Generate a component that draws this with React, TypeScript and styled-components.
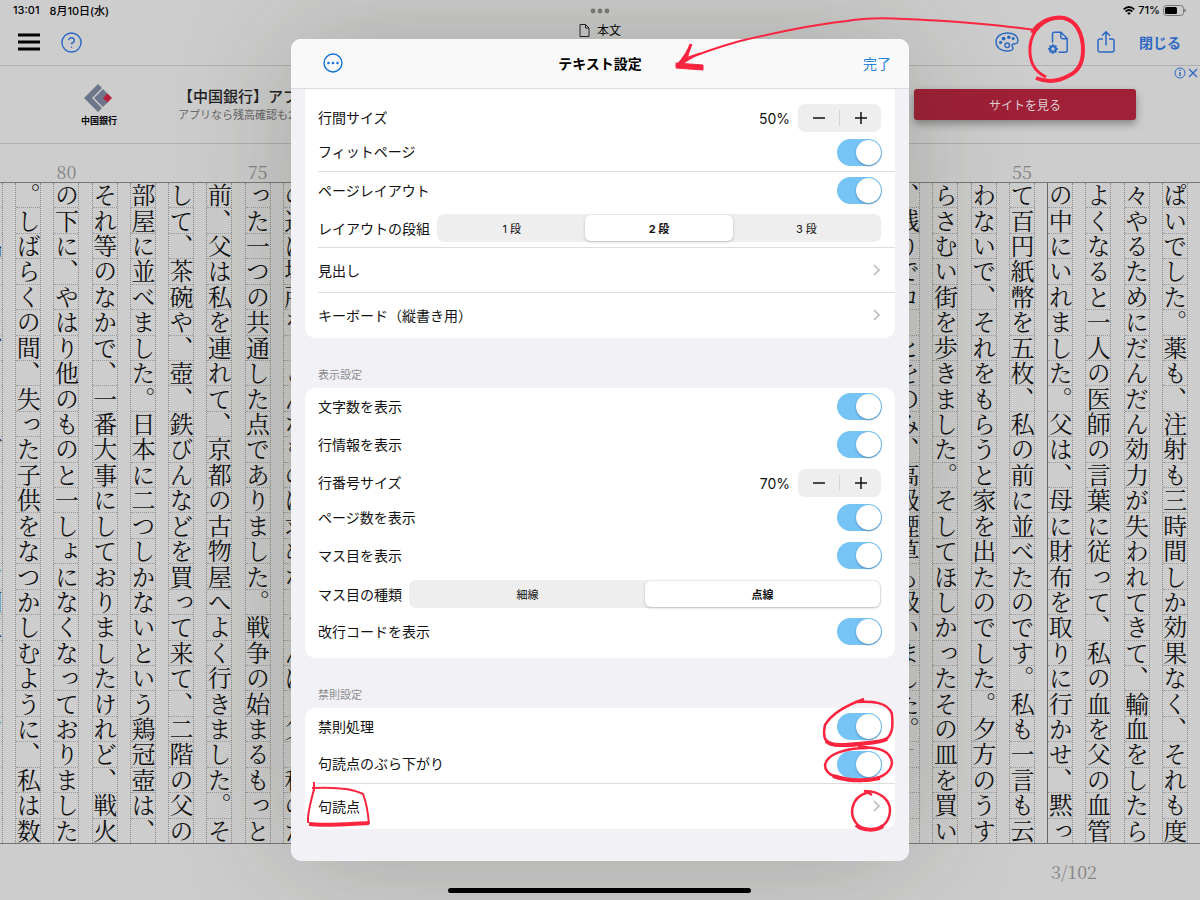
import React, { useState } from "react";
import styled, { createGlobalStyle } from "styled-components";
import { CircleHelp } from "lucide-react";

const sans = `Inter, "Noto Sans CJK JP", sans-serif`;
const mincho = `"Noto Serif CJK JP", "Noto Sans CJK JP", serif`;
const blue = "#2c69c4";

const Global = createGlobalStyle`
  *, *::before, *::after { box-sizing: border-box; }
  body { margin: 0; background: #cdcdcd; color: #000; font-family: ${sans}; }
  button { font: inherit; color: inherit; background: none; border: 0; padding: 0; cursor: pointer; }
  svg { display: block; }
`;

const Page = styled.div`
  position: relative;
  display: flex;
  flex-direction: column;
  min-height: 100vh;
  overflow: hidden;
`;

/* ---------- top chrome ---------- */

const TopBar = styled.header`
  display: grid;
  grid-template-columns: 1fr auto 1fr;
  height: 66px;
  border-bottom: 1px solid #b0b0b0;
`;

const BarSide = styled.div<{ $end?: boolean }>`
  display: flex;
  flex-direction: column;
  align-items: ${(p) => (p.$end ? "flex-end" : "flex-start")};
`;

const Status = styled.div`
  display: flex;
  align-items: center;
  gap: 10px;
  height: 20px;
  padding: 0 14px 0 13px;
  font-size: 11px;
  font-weight: 500;
`;

const Indicators = styled(Status)`
  gap: 3px;
`;

const Actions = styled.div<{ $gap: number }>`
  display: flex;
  align-items: center;
  gap: ${(p) => p.$gap}px;
  height: 46px;
  padding: 0 19px 2px 18px;
`;

const IconButton = styled.button`
  color: ${blue};
`;

const CloseButton = styled.button`
  margin-left: -4px;
  color: ${blue};
  font-size: 14px;
  font-weight: 700;
`;

const BarCenter = styled.div`
  display: flex;
  flex-direction: column;
  align-items: center;
`;

const Dots = styled.div`
  display: flex;
  align-items: center;
  height: 22px;
`;

const DocTitle = styled.div`
  display: flex;
  align-items: center;
  gap: 7px;
  height: 17px;
  font-size: 12px;
  line-height: 17px;
`;

/* ---------- advertisement ---------- */

const Ad = styled.aside`
  position: relative;
  display: flex;
  align-items: center;
  height: 78px;
  border-bottom: 1px solid #b0b0b0;
`;

const Bank = styled.div`
  display: flex;
  flex-direction: column;
  align-items: center;
  gap: 3px;
  width: 198px;
  padding-top: 2px;
  font-size: 9px;
  line-height: 12px;
  font-weight: 700;
`;

const AdCopy = styled.div`
  flex: 1;
  margin-left: -20px;
`;

const AdHeadline = styled.div`
  font-size: 15px;
  line-height: 20px;
  font-weight: 500;
  color: #222;
`;

const AdText = styled.div`
  font-size: 11px;
  line-height: 16px;
  color: #666;
`;

const AdLink = styled.a`
  display: flex;
  align-items: center;
  justify-content: center;
  width: 222px;
  height: 31px;
  margin-right: 64px;
  border-radius: 3px;
  background: #9f2037;
  box-shadow: 0 4px 8px rgba(0, 0, 0, 0.35);
  color: #dcd0d2;
  font-size: 12px;
  text-decoration: none;
`;

const AdChoices = styled.div`
  position: absolute;
  top: 1px;
  right: 2px;
  display: flex;
  gap: 2px;
`;

/* ---------- manuscript ---------- */

const lineGrid = `
  display: grid;
  grid-template-columns: repeat(32, 1fr);
  margin-left: -23px;
`;

const LineNumbers = styled.div`
  ${lineGrid}
  height: 38px;
`;

const LineNumber = styled.div`
  display: flex;
  justify-content: center;
  width: 26px;
  padding-top: 15px;
  font-family: ${mincho};
  font-size: 18px;
  line-height: 24px;
  color: #838383;
`;

const Manuscript = styled.main`
  ${lineGrid}
  flex: 1;
  border-top: 1px solid #777;
  border-bottom: 1px solid #777;
`;

const Line = styled.div<{ $divider?: boolean }>`
  display: flex;
  flex-direction: column;
  width: 26px;
  border-left: 1px ${(p) => (p.$divider ? "solid #666" : "dotted #888")};
  border-right: 1px dotted #888;
`;

const Cell = styled.div<{ $mark?: boolean }>`
  display: flex;
  align-items: center;
  justify-content: center;
  flex: 1 1 0;
  min-height: 0;
  border-bottom: 1px dotted #999;
  writing-mode: vertical-rl;
  font-family: ${mincho};
  font-size: 24px;
  line-height: 24px;
  font-weight: 400;
  color: ${(p) => (p.$mark ? "#888" : "#111")};
  &:last-child { border-bottom: 0; }
`;

const Footer = styled.footer`
  height: 56px;
  padding: 15px 103px 0 0;
  text-align: right;
  font-family: ${mincho};
  font-size: 18px;
  line-height: 24px;
  color: #838383;
`;

const HomeIndicator = styled.div`
  position: absolute;
  bottom: 7px;
  left: 50%;
  width: 303px;
  height: 5px;
  margin-left: -152px;
  border-radius: 3px;
  background: #000;
`;

/* ---------- settings sheet ---------- */

const Overlay = styled.div`
  position: absolute;
  inset: 0;
  display: flex;
  justify-content: center;
  padding: 39px 0;
`;

const Sheet = styled.section`
  display: flex;
  flex-direction: column;
  width: min(618px, 100%);
  border-radius: 10px;
  overflow: hidden;
  background: #f2f2f6;
  box-shadow: 0 0 120px rgba(30, 40, 25, 0.22);
`;

const SheetHeader = styled.div`
  display: grid;
  grid-template-columns: 1fr auto 1fr;
  align-items: center;
  height: 50px;
  flex: none;
  padding: 0 18px 2px 32px;
  border-bottom: 1px solid #dcdcdf;
  background: #f9f9fa;
`;

const SheetTitle = styled.h1`
  margin: 0 14px 0 0;
  font-size: 14px;
  font-weight: 700;
`;

const MoreButton = styled.button`
  justify-self: start;
  color: #1272d8;
`;

const DoneButton = styled.button`
  justify-self: end;
  color: #2a86d8;
  font-size: 14px;
`;

const SheetBody = styled.div`
  flex: 1;
  overflow: hidden;
  padding: 0 14px;
`;

const Card = styled.div<{ $continued?: boolean; $roomy?: boolean }>`
  padding: ${(p) => (p.$continued ? 10 : 0)}px 0 ${(p) => (p.$roomy ? 7 : 0)}px;
  border-radius: ${(p) => (p.$continued ? "0 0 10px 10px" : "10px")};
  background: #fff;
`;

const GroupTitle = styled.h2`
  height: 50px;
  margin: 0;
  padding: 29px 13px 0;
  font-size: 11px;
  line-height: 16px;
  font-weight: 400;
  color: #8b8b8f;
`;

const Row = styled.div<{ $line?: boolean }>`
  display: flex;
  align-items: center;
  height: 38px;
  margin-left: 13px;
  padding: 0 13px 1px 0;
  border-bottom: ${(p) => (p.$line ? "1px solid #dcdcde" : "0")};
  font-size: 14px;
  color: #111;
`;

const StepperLine = styled(Row)`
  height: 35px;
  padding: 3px 14px 0 0;
`;

const NavRow = styled.button<{ $line?: boolean }>`
  display: flex;
  align-items: center;
  justify-content: space-between;
  width: calc(100% - 13px);
  height: 45px;
  margin-left: 13px;
  padding: 0 15px 1px 0;
  border-bottom: ${(p) => (p.$line ? "1px solid #dcdcde" : "0")};
  font-size: 14px;
  text-align: left;
  color: #111;
`;

const RowLabel = styled.label`
  flex: 1;
  padding-bottom: 2px;
`;

const Switch = styled.input`
  appearance: none;
  position: relative;
  width: 45px;
  height: 27px;
  margin: 0;
  border-radius: 14px;
  background: #e4e4e6;
  cursor: pointer;
  &::before {
    content: "";
    position: absolute;
    top: 1px;
    left: 1px;
    width: 25px;
    height: 25px;
    border-radius: 50%;
    background: #fff;
    box-shadow: 0 1px 2px rgba(0, 50, 110, 0.4);
  }
  &:checked { background: #76c3f5; }
  &:checked::before { left: 19px; }
`;

const StepValue = styled.output`
  margin-right: 8px;
  font-size: 14px;
`;

const StepBox = styled.div`
  display: flex;
  width: 83px;
  height: 28px;
  padding: 6px 0;
  border-radius: 7px;
  background: #eeeeef;
`;

const StepButton = styled.button`
  display: flex;
  flex: 1;
  align-items: center;
  justify-content: center;
  & + & { border-left: 1px solid #d5d5d8; }
`;

const Segments = styled.fieldset`
  display: flex;
  flex: 1;
  min-width: 0;
  height: 28px;
  margin: 0 1px 0 7px;
  padding: 1px;
  border: 0;
  border-radius: 7px;
  background: #eeeeef;
`;

const Segment = styled.label<{ $on: boolean }>`
  display: flex;
  flex: 1;
  align-items: center;
  justify-content: center;
  border-radius: 6px;
  background: ${(p) => (p.$on ? "#fff" : "transparent")};
  box-shadow: ${(p) => (p.$on ? "0 1px 3px rgba(0,0,0,0.22)" : "none")};
  font-size: 11px;
  font-weight: ${(p) => (p.$on ? 700 : 400)};
  cursor: pointer;
`;

const SegmentInput = styled.input`
  appearance: none;
  width: 0;
  height: 0;
  margin: 0;
`;

const Ink = styled.svg`
  position: absolute;
  inset: 0;
  width: 100%;
  height: 100%;
  pointer-events: none;
`;

/* ---------- pieces ---------- */

function ToggleRow({ id, label, line }: { id: string; label: string; line?: boolean }) {
  const [on, setOn] = useState(true);
  return (
    <Row $line={line}>
      <RowLabel htmlFor={id}>{label}</RowLabel>
      <Switch id={id} type="checkbox" checked={on} onChange={() => setOn(!on)} />
    </Row>
  );
}

function StepperRow({ label, initial }: { label: string; initial: number }) {
  const [value, setValue] = useState(initial);
  return (
    <StepperLine>
      <RowLabel as="span">{label}</RowLabel>
      <StepValue>{value}%</StepValue>
      <StepBox>
        <StepButton aria-label={label + "を減らす"} onClick={() => setValue(value - 10)}>
          <svg width="14" height="14" stroke="#111" strokeWidth="1.5"><path d="M1 7h12" /></svg>
        </StepButton>
        <StepButton aria-label={label + "を増やす"} onClick={() => setValue(value + 10)}>
          <svg width="14" height="14" stroke="#111" strokeWidth="1.5"><path d="M1 7h12M7 1v12" /></svg>
        </StepButton>
      </StepBox>
    </StepperLine>
  );
}

function SegmentRow({ name, label, options, initial, line }: {
  name: string; label: string; options: string[]; initial: number; line?: boolean;
}) {
  const [index, setIndex] = useState(initial);
  return (
    <Row $line={line}>
      <span>{label}</span>
      <Segments aria-label={label}>
        {options.map((o, i) => (
          <Segment key={o} $on={i === index}>
            <SegmentInput type="radio" name={name} checked={i === index} onChange={() => setIndex(i)} />
            {o}
          </Segment>
        ))}
      </Segments>
    </Row>
  );
}

function LinkRow({ label, line }: { label: string; line?: boolean }) {
  return (
    <NavRow $line={line}>
      {label}
      <svg width="7" height="12" fill="none" stroke="#bdbdc1" strokeWidth="1.7"><path d="M1 1l5 5-5 5" /></svg>
    </NavRow>
  );
}

const PaletteIcon = () => (
  <svg width="24" height="20" viewBox="0 0 24 20" fill="none" stroke="currentColor" strokeWidth="1.4">
    <path d="M12.5 1C6 .8 1 4.600 1 10c0 5.200 4.800 9 10.600 9 3.400 0 6.400-1 6.400-2.700 0-1.300-1.200-1.700-1-3 .2-1.200 1.500-1.500 3-1.500 1.800 0 3-1.300 2.900-3.400C22.600 4 18.500 1.200 12.500 1z" />
    <circle cx="12.200" cy="13.300" r="2.300" />
    <g fill="currentColor" stroke="none">
      <circle cx="5.600" cy="10.400" r="1.600" /><circle cx="8.600" cy="6.600" r="1.900" />
      <circle cx="13.800" cy="5.200" r="1.700" /><circle cx="18.200" cy="6.600" r="1.500" />
    </g>
  </svg>
);

const FileGearIcon = () => (
  <svg width="22" height="23" viewBox="0 0 22 23" fill="none" stroke="currentColor" strokeWidth="1.500">
    <path d="M5.500 11.500V3.200Q5.500 1.200 7.500 1.200H14L20.200 7.500V19.200Q20.200 21.200 18.200 21.200H11.500M13.800 1.400V6Q13.800 7.700 15.500 7.700H20" />
    <circle cx="6" cy="18" r="2.700" strokeWidth="2" />
    <path strokeWidth="1.900" d="M6 13.200v1.800M6 21v1.800M1.200 18H3M9 18h1.800M2.600 14.600l1.300 1.300M8.100 20.100l1.300 1.300M2.600 21.400l1.300-1.300M8.100 15.900l1.300-1.300" />
  </svg>
);

const ShareIcon = () => (
  <svg width="18" height="24" viewBox="0 0 18 24" fill="none" stroke="currentColor" strokeWidth="1.500">
    <path d="M6 9H3Q1 9 1 11V20Q1 22 3 22H15Q17 22 17 20V11Q17 9 15 9H12M9 15.500V2M5 5.800L9 1.800L13 5.800" />
  </svg>
);

/* Manuscript lines keyed by line number; each holds 26 cells. */
const lines: Record<number, string> = {
  51: "ぱいでした。薬も、注射も三時間しか効果なく、それも度",
  52: "々やるためにだんだん効力が失われてきて、輸血をしたら",
  53: "よくなると一人の医師の言葉に従って、私の血を父の血管",
  54: "の中にいれました。父は、母に財布を取りに行かせ、黙っ",
  55: "て百円紙幣を五枚、私の前に並べたのです。私も一言も云",
  56: "わないで、それをもらうと家を出たのでした。夕方のうす",
  57: "らさむい街を歩きました。そしてほしかったその皿を買い",
  58: "、残りでコーヒをのみ、高級煙草も吸いました。」",
  74: "の道は場所を、こんなものは求めなくしんは、父、私のた",
  75: "った一つの共通した点でありました。戦争の始まるもっと",
  76: "前、父は私を連れて、京都の古物屋へよく行きました。そ",
  77: "して、茶碗や、壺、鉄びんなどを買って来て、二階の父の",
  78: "部屋に並べました。日本に二つしかないという鶏冠壺は、",
  79: "それ等のなかで、一番大事にしておりましたけれど、戦火",
  80: "の下に、やはり他のものと一しょになくなっておりました",
  81: "。しばらくの間、失った子供をなつかしむように、私は数",
  82: "　の品　そのびのをのげ　いとし、国区　とと、　こ　　",
};
const lineOrder = Array.from({ length: 32 }, (_, i) => 82 - i);
const cellIndexes = Array.from({ length: 26 }, (_, i) => i);

export default function App() {
  return (
    <Page>
      <Global />
      <TopBar>
        <BarSide>
          <Status><span>13:01</span><span>8月10日(水)</span></Status>
          <Actions $gap={20}>
            <IconButton aria-label="メニュー">
              <svg width="22" height="18" stroke="#000" strokeWidth="3"><path d="M0 2h22M0 9h22M0 16h22" /></svg>
            </IconButton>
            <IconButton aria-label="ヘルプ"><CircleHelp size={23} strokeWidth={1.5} /></IconButton>
          </Actions>
        </BarSide>
        <BarCenter>
          <Dots>
            <svg width="20" height="6" fill="#7c7c7c">
              <circle cx="3" cy="3" r="2.400" /><circle cx="10" cy="3" r="2.400" /><circle cx="17" cy="3" r="2.400" />
            </svg>
          </Dots>
          <DocTitle>
            <svg width="11" height="13" fill="none" stroke="#222"><path d="M1 .5h5.500l3.500 3.500v8.500H1zM6.500.5V4H10" /></svg>
            本文
          </DocTitle>
        </BarCenter>
        <BarSide $end>
          <Indicators>
            <svg width="12" height="9" fill="none" stroke="#000" strokeWidth="1.700">
              <path d="M.6 3.400Q6-1.400 11.400 3.400M2.600 5.500Q6 2.500 9.400 5.500" /><path d="M4.200 7L6 9L7.800 7Q6 5.600 4.200 7z" fill="#000" stroke="none" />
            </svg>
            <span>71%</span>
            <svg width="23" height="11" fill="none">
              <rect x=".5" y=".5" width="20" height="10" rx="3" stroke="#777" />
              <rect x="2" y="2" width="12" height="7" rx="1.500" fill="#000" />
              <path d="M22 4v3" stroke="#777" strokeWidth="1.500" />
            </svg>
          </Indicators>
          <Actions $gap={28}>
            <IconButton aria-label="配色"><PaletteIcon /></IconButton>
            <IconButton aria-label="テキスト設定"><FileGearIcon /></IconButton>
            <IconButton aria-label="共有"><ShareIcon /></IconButton>
            <CloseButton>閉じる</CloseButton>
          </Actions>
        </BarSide>
      </TopBar>

      <Ad>
        <Bank>
          <svg width="30" height="28" viewBox="0 0 30 28">
            <path d="M14 0l4 4L8 14l10 10-4 4L0 14z" fill="#6e7688" />
            <path d="M19 5l5 5-4 4 4 4-5 5-9-9z" fill="#6e7688" />
            <path d="M23.500 9.500L28 14l-4.500 4.500L19 14z" fill="#b51f3c" />
            <path d="M13 3L3 14l10 11M19 8l-6 6 6 6" fill="none" stroke="#4a72c0" strokeWidth="1" strokeDasharray="1 2" />
          </svg>
          中国銀行
        </Bank>
        <AdCopy>
          <AdHeadline>【中国銀行】アプリ</AdHeadline>
          <AdText>アプリなら残高確認も24</AdText>
        </AdCopy>
        <AdLink href="#">サイトを見る</AdLink>
        <AdChoices>
          <svg width="12" height="12" fill="none" stroke={blue}><circle cx="6" cy="6" r="5" /><path d="M6 5v4M6 2.800v1.200" strokeWidth="1.400" /></svg>
          <svg width="10" height="12" fill="none" stroke={blue} strokeWidth="1.300"><path d="M1 2l8 8M9 2l-8 8" /></svg>
        </AdChoices>
      </Ad>

      <LineNumbers>
        {lineOrder.map((n) => <LineNumber key={n}>{n % 5 === 0 && lines[n] ? n : ""}</LineNumber>)}
      </LineNumbers>
      <Manuscript>
        {lineOrder.map((n) => (
          <Line key={n} $divider={n === 54}>
            {cellIndexes.map((i) => {
              const ch = lines[n]?.[i] ?? "";
              return <Cell key={i} $mark={ch === "」"}>{ch}</Cell>;
            })}
          </Line>
        ))}
      </Manuscript>
      <Footer>3/102</Footer>

      <Overlay>
        <Sheet role="dialog" aria-label="テキスト設定">
          <SheetHeader>
            <MoreButton aria-label="その他">
              <svg width="20" height="20" fill="none" stroke="currentColor" strokeWidth="1.400">
                <circle cx="10" cy="10" r="9" />
                <g fill="currentColor" stroke="none"><circle cx="5.500" cy="10" r="1.300" /><circle cx="10" cy="10" r="1.300" /><circle cx="14.500" cy="10" r="1.300" /></g>
              </svg>
            </MoreButton>
            <SheetTitle>テキスト設定</SheetTitle>
            <DoneButton>完了</DoneButton>
          </SheetHeader>
          <SheetBody>
            <Card $continued>
              <StepperRow label="行間サイズ" initial={50} />
              <ToggleRow id="fit" label="フィットページ" line />
              <ToggleRow id="layout" label="ページレイアウト" />
              <SegmentRow name="columns" label="レイアウトの段組" options={["1 段", "2 段", "3 段"]} initial={1} line />
              <LinkRow label="見出し" line />
              <LinkRow label="キーボード（縦書き用）" />
            </Card>
            <GroupTitle>表示設定</GroupTitle>
            <Card $roomy>
              <ToggleRow id="chars" label="文字数を表示" />
              <ToggleRow id="lineinfo" label="行情報を表示" />
              <StepperRow label="行番号サイズ" initial={70} />
              <ToggleRow id="pages" label="ページ数を表示" />
              <ToggleRow id="grid" label="マス目を表示" />
              <SegmentRow name="gridkind" label="マス目の種類" options={["細線", "点線"]} initial={1} />
              <ToggleRow id="breaks" label="改行コードを表示" />
            </Card>
            <GroupTitle>禁則設定</GroupTitle>
            <Card>
              <ToggleRow id="kinsoku" label="禁則処理" />
              <ToggleRow id="hanging" label="句読点のぶら下がり" line />
              <LinkRow label="句読点" />
            </Card>
          </SheetBody>
        </Sheet>
      </Overlay>
      <HomeIndicator />

      <Ink viewBox="0 0 1200 900" fill="none" stroke="#fb2540" strokeWidth="3" strokeLinejoin="round" aria-hidden="true">
        <path strokeWidth="2" d="M1035 30C1000 25 950 21 925 20C890 18 870 17 847 21C810 25 775 33 740 41C715 48 700 53 680 62" />
        <path d="M691 44Q688 54 678 65" />
        <path fill="#fb2540" strokeWidth="1" d="M676 63L703 65L703 70L676 68z" />
        <path fill="#fb2540" strokeWidth="1" d="M676 66L688 56L691 44L685 58L700 53L682 64z" />
        <path d="M1046 77C1034 71 1029 62 1030 47C1031 31 1044 18 1060 18" />
        <path strokeWidth="4" d="M1032 33C1040 20 1054 16 1064 18C1077 21 1083 35 1083 50C1083 63 1078 71 1070 75C1060 81 1048 83 1036 78" />
        <path strokeWidth="2.500" d="M864 699C850 704 832 713 825 725C823 734 824 741 830 744C845 749 872 743 885 740C893 735 893 725 892 714C888 702 872 701 856 702" />
        <path strokeWidth="4" d="M826 741C833 747 845 745 868 743C878 742 883 741 887 739" />
        <path strokeWidth="2.500" d="M868 748C845 748 827 754 825 765C825 776 840 780 860 781C880 780 891 773 892 763C891 752 882 747 858 747" />
        <path strokeWidth="4" d="M833 776C845 780 862 782 880 778" />
        <path strokeWidth="2.500" d="M872 795L865 791C880 791 890 800 890 810C890 822 882 829 870 830C858 829 852 820 852 811C853 800 860 794 870 792" />
        <path strokeWidth="4" d="M856 825C863 831 877 831 883 826" />
        <path strokeWidth="2" d="M314 782V791M312 788C332 787 352 788 363 794C367 804 368 812 369 824M314 789C311 802 307 813 308 823" />
        <path strokeWidth="4" d="M309 824C325 826 347 824 369 823" />
      </Ink>
    </Page>
  );
}
